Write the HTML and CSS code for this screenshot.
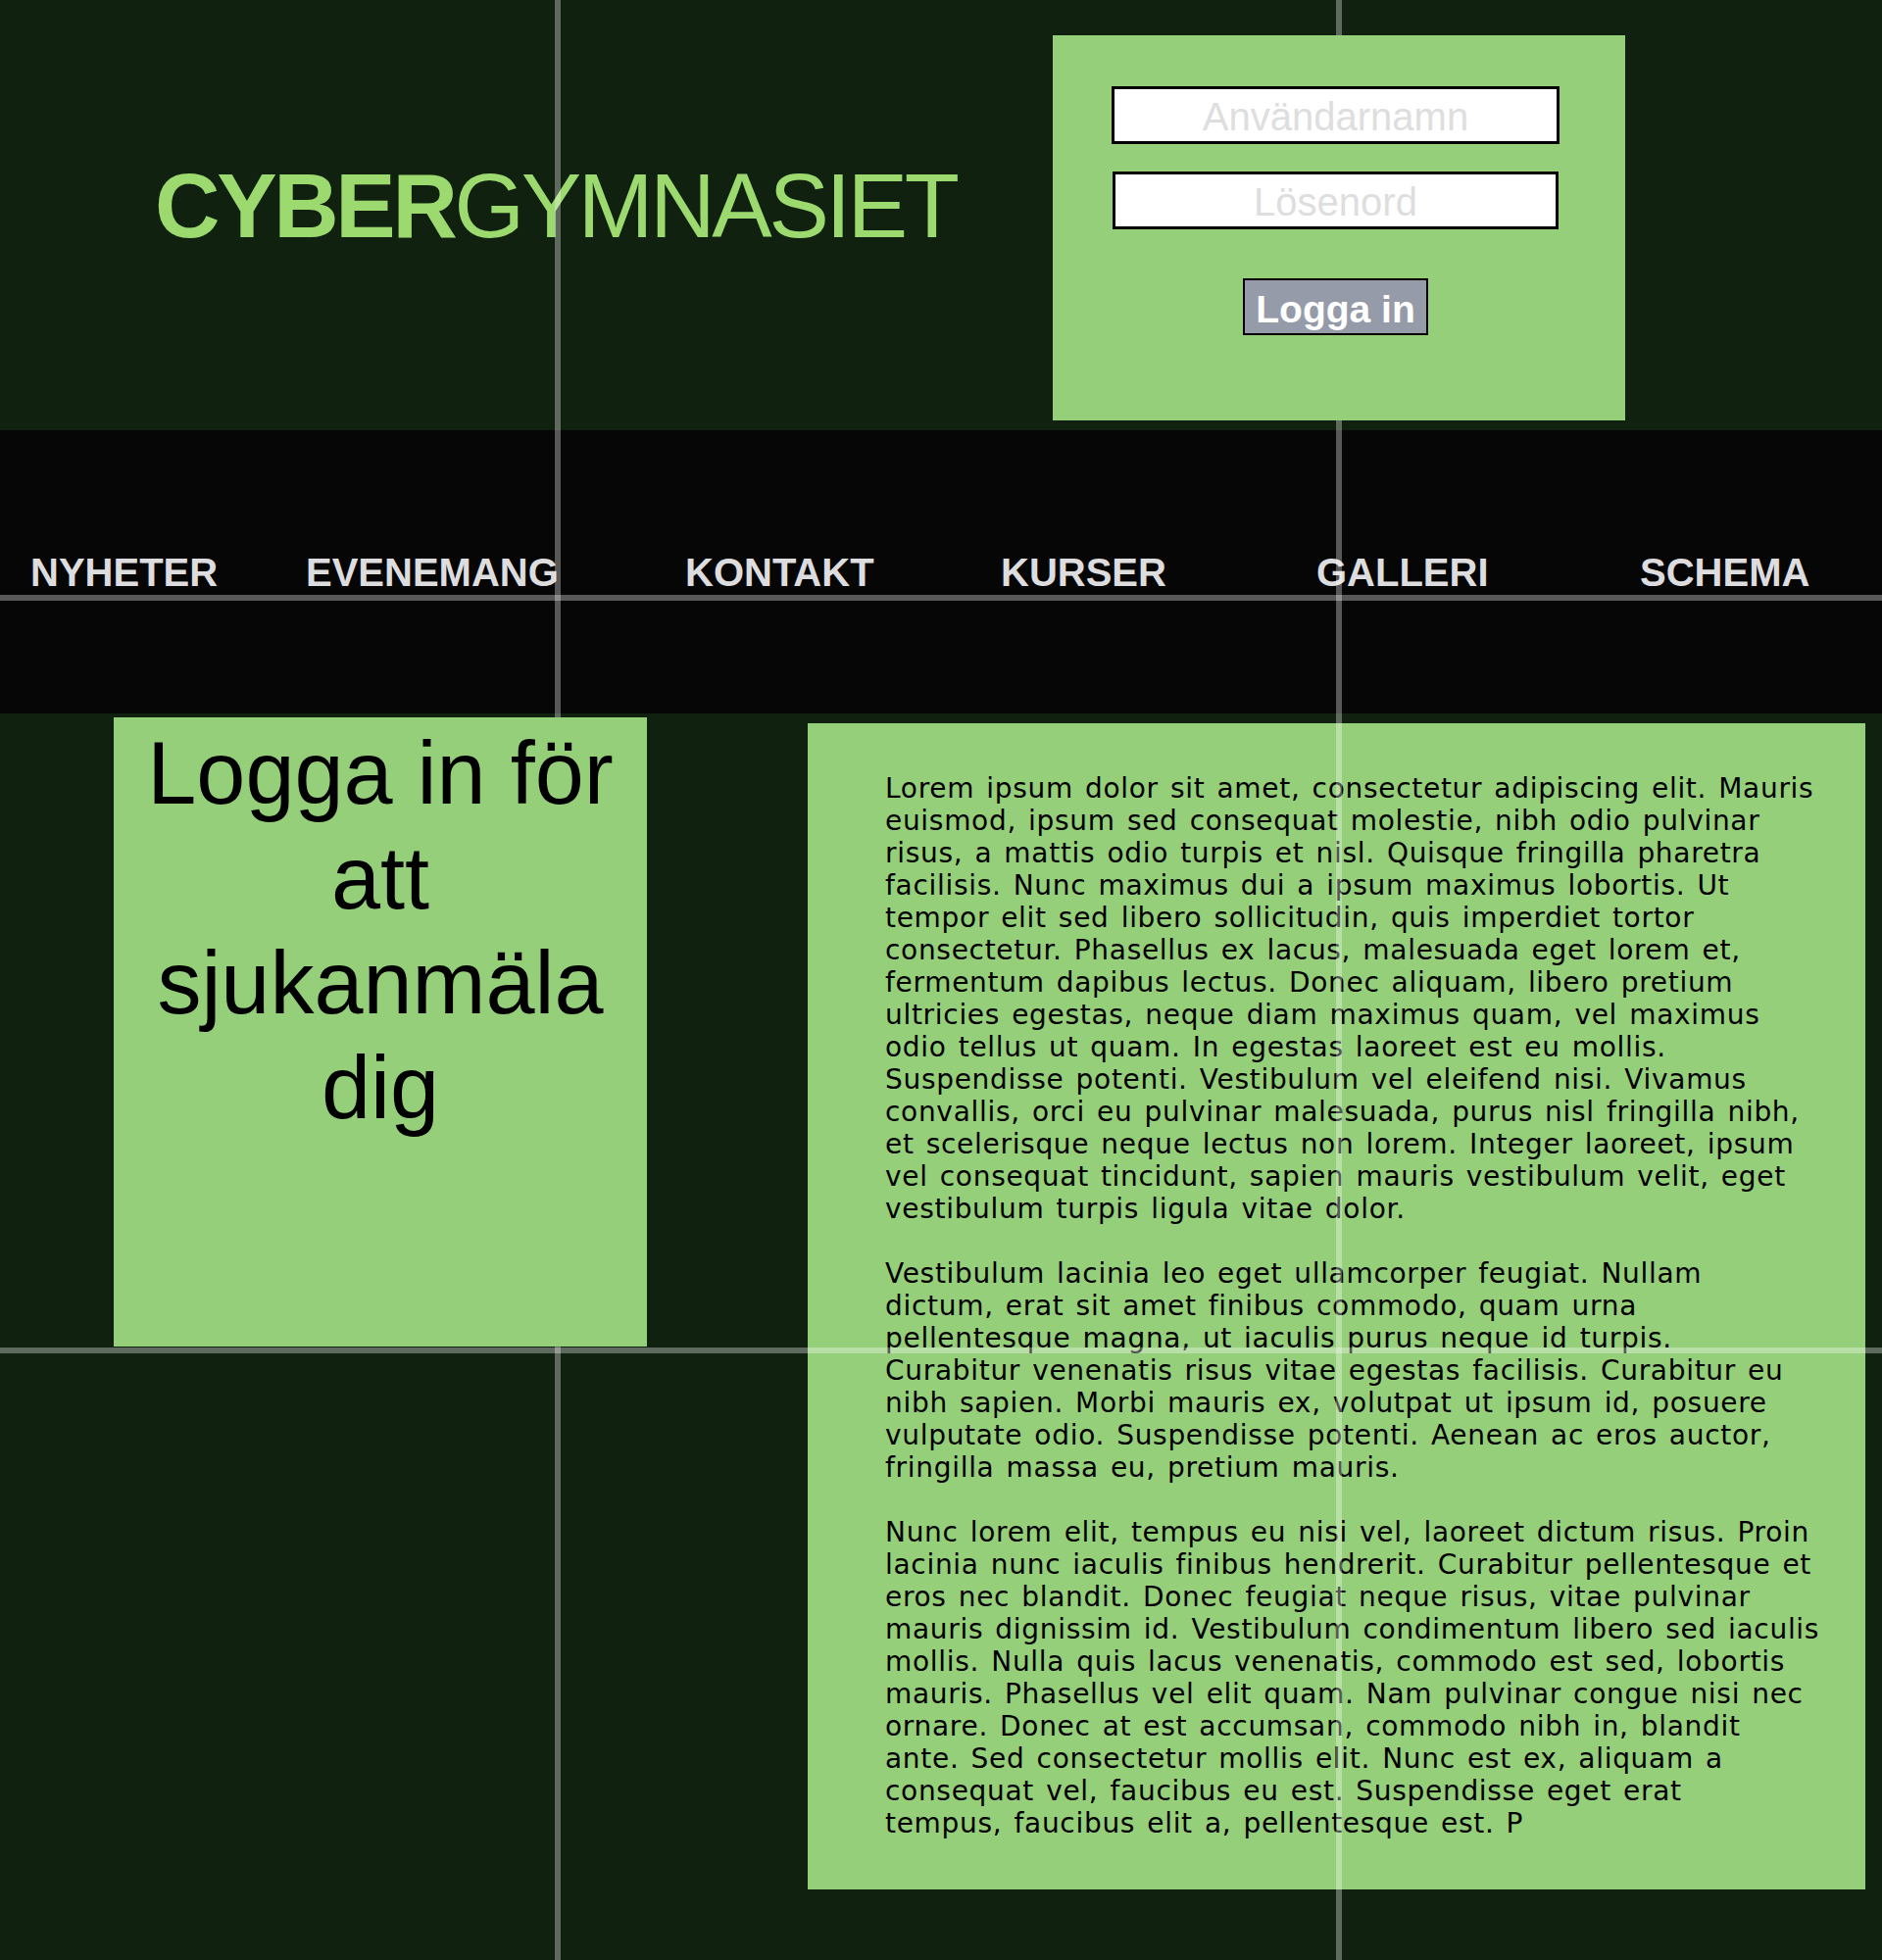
FILE: index.html
```html
<!DOCTYPE html>
<html lang="sv">
<head>
<meta charset="utf-8">
<title>Cybergymnasiet</title>
<link rel="stylesheet" href="styles.css">
</head>
<body>
<div class="page">
  <header class="header">
    <h1 class="logo"><span class="logo-bold">CYBER</span><span class="logo-light">GYMNASIET</span></h1>
    <form class="login">
      <input class="field" type="text" placeholder="Användarnamn">
      <input class="field field-pass" type="password" placeholder="Lösenord">
      <button class="login-btn" type="button">Logga in</button>
    </form>
  </header>

  <nav class="nav">
    <a class="nav-link" href="#">NYHETER</a>
    <a class="nav-link" href="#">EVENEMANG</a>
    <a class="nav-link" href="#">KONTAKT</a>
    <a class="nav-link" href="#">KURSER</a>
    <a class="nav-link" href="#">GALLERI</a>
    <a class="nav-link" href="#">SCHEMA</a>
  </nav>

  <main class="content">
    <aside class="notice">Logga in för att sjukanmäla dig</aside>
    <article class="article">
      <p>Lorem ipsum dolor sit amet, consectetur adipiscing elit. Mauris<br>
euismod, ipsum sed consequat molestie, nibh odio pulvinar<br>
risus, a mattis odio turpis et nisl. Quisque fringilla pharetra<br>
facilisis. Nunc maximus dui a ipsum maximus lobortis. Ut<br>
tempor elit sed libero sollicitudin, quis imperdiet tortor<br>
consectetur. Phasellus ex lacus, malesuada eget lorem et,<br>
fermentum dapibus lectus. Donec aliquam, libero pretium<br>
ultricies egestas, neque diam maximus quam, vel maximus<br>
odio tellus ut quam. In egestas laoreet est eu mollis.<br>
Suspendisse potenti. Vestibulum vel eleifend nisi. Vivamus<br>
convallis, orci eu pulvinar malesuada, purus nisl fringilla nibh,<br>
et scelerisque neque lectus non lorem. Integer laoreet, ipsum<br>
vel consequat tincidunt, sapien mauris vestibulum velit, eget<br>
vestibulum turpis ligula vitae dolor.</p>
      <p>Vestibulum lacinia leo eget ullamcorper feugiat. Nullam<br>
dictum, erat sit amet finibus commodo, quam urna<br>
pellentesque magna, ut iaculis purus neque id turpis.<br>
Curabitur venenatis risus vitae egestas facilisis. Curabitur eu<br>
nibh sapien. Morbi mauris ex, volutpat ut ipsum id, posuere<br>
vulputate odio. Suspendisse potenti. Aenean ac eros auctor,<br>
fringilla massa eu, pretium mauris.</p>
      <p>Nunc lorem elit, tempus eu nisi vel, laoreet dictum risus. Proin<br>
lacinia nunc iaculis finibus hendrerit. Curabitur pellentesque et<br>
eros nec blandit. Donec feugiat neque risus, vitae pulvinar<br>
mauris dignissim id. Vestibulum condimentum libero sed iaculis<br>
mollis. Nulla quis lacus venenatis, commodo est sed, lobortis<br>
mauris. Phasellus vel elit quam. Nam pulvinar congue nisi nec<br>
ornare. Donec at est accumsan, commodo nibh in, blandit<br>
ante. Sed consectetur mollis elit. Nunc est ex, aliquam a<br>
consequat vel, faucibus eu est. Suspendisse eget erat<br>
tempus, faucibus elit a, pellentesque est. P</p>
    </article>
  </main>

  <div class="guides" aria-hidden="true">
    <span class="guide guide-v guide-v1"></span>
    <span class="guide guide-v guide-v2"></span>
    <span class="guide guide-h guide-h1"></span>
    <span class="guide guide-h guide-h2"></span>
  </div>
</div>
</body>
</html>
```

FILE: styles.css
```css
html, body {
  margin: 0;
  padding: 0;
  background: #11210f;
}

body {
  font-family: "Liberation Sans", Arial, sans-serif;
}

.page {
  position: relative;
  min-height: 2000px;
  overflow: hidden;
}

/* ---------- header ---------- */
.header {
  display: flex;
  align-items: flex-start;
  height: 439px;
  box-sizing: border-box;
  padding: 36px 262px 0 158px;
}

.logo {
  margin: 128px 0 0 0;
  font-size: 92px;
  line-height: 92px;
  letter-spacing: -3.3px;
  color: #9cd96f;
  white-space: nowrap;
}

.logo-bold {
  font-weight: 700;
}

.logo-light {
  font-weight: 400;
}

.login {
  position: relative;
  z-index: 2;
  margin: 0 0 0 auto;
  width: 584px;
  height: 393px;
  box-sizing: border-box;
  padding: 52px 67px 0 60px;
  background: #95cf7a;
  display: flex;
  flex-direction: column;
  align-items: center;
}

.field {
  width: 457px;
  height: 59px;
  box-sizing: border-box;
  margin: 0;
  padding: 4px 0 0 0;
  border: 3px solid #000;
  background: #fff;
  font-family: "Liberation Sans", Arial, sans-serif;
  font-size: 40px;
  text-align: center;
  color: #333;
  outline: none;
}

.field::placeholder {
  color: #dedede;
}

.field-pass {
  width: 455px;
  margin-top: 28px;
}

.login-btn {
  margin-top: 50px;
  width: 189px;
  height: 58px;
  box-sizing: border-box;
  padding: 4px 0 0 0;
  border: 2px solid #000;
  background: #959ba8;
  color: #fff;
  font-family: "Liberation Sans", Arial, sans-serif;
  font-weight: 700;
  font-size: 39px;
  line-height: 1;
}

/* ---------- nav ---------- */
.nav {
  display: grid;
  grid-template-columns: 281px 387px 322px 322px 330px auto;
  height: 289px;
  box-sizing: border-box;
  padding: 122px 0 0 31px;
  background: #060606;
}

.nav-link {
  font-size: 40px;
  line-height: 46px;
  font-weight: 700;
  color: #dddddf;
  text-decoration: none;
  white-space: nowrap;
}

/* ---------- content ---------- */
.content {
  display: flex;
  align-items: flex-start;
  padding: 4px 0 0 116px;
}

.notice {
  position: relative;
  z-index: 2;
  width: 544px;
  height: 642px;
  box-sizing: border-box;
  padding-top: 4px;
  background: #95cf7a;
  color: #000;
  font-size: 90px;
  line-height: 107px;
  text-align: center;
}

.article {
  margin: 6px 0 0 164px;
  width: 1079px;
  box-sizing: border-box;
  padding: 50px 20px 51px 79px;
  background: #95cf7a;
  color: #000;
  font-family: "DejaVu Sans", sans-serif;
  font-size: 28px;
  line-height: 33px;
  letter-spacing: 0.7px;
  word-spacing: 2.5px;
  white-space: nowrap;
}

.article p {
  margin: 0 0 33px 0;
}

.article p:last-child {
  margin-bottom: 0;
}

/* ---------- layout guides ---------- */
.guides {
  position: absolute;
  inset: 0;
  z-index: 1;
  pointer-events: none;
}

.guide {
  position: absolute;
  background: rgba(255, 255, 255, 0.33);
}

.guide-v {
  top: 0;
  bottom: 0;
  width: 6px;
}

.guide-h {
  left: 0;
  right: 0;
  height: 6px;
}

.guide-v1 { left: 566px; }
.guide-v2 { left: 1363px; }
.guide-h1 { top: 607px; }
.guide-h2 { top: 1375px; }
```
